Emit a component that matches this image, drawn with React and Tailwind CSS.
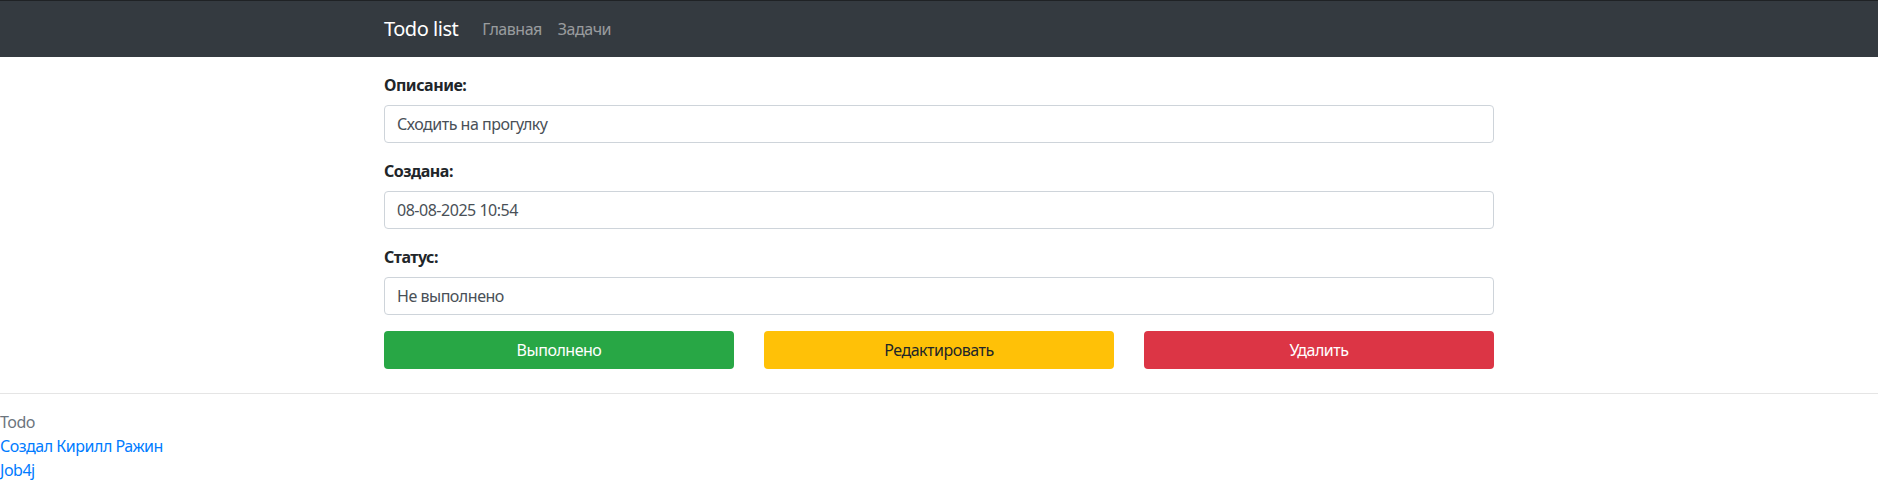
export default function App() {
    return (
        <div className="min-h-[486px] bg-white text-[#212529] text-base leading-6 tracking-[-0.03em] font-['Segoe_UI','Noto_Sans','Liberation_Sans',sans-serif]">
            <nav className="bg-[#343a40] border-t border-[#1f2225] h-[57px]">
                <div className="w-[1110px] mx-auto h-full flex items-center">
                    <a className="text-white text-[20px] leading-[30px] mr-4">Todo list</a>
                    <a className="text-white/50 px-2">Главная</a>
                    <a className="text-white/50 px-2">Задачи</a>
                </div>
            </nav>

            <main className="w-[1110px] mx-auto pt-4">
                <div className="mb-4">
                    <label className="block font-bold mb-2">Описание:</label>
                    <div className="h-[38px] border border-[#ced4da] rounded px-3 flex items-center text-[#495057]">
                        Сходить на прогулку
                    </div>
                </div>
                <div className="mb-4">
                    <label className="block font-bold mb-2">Создана:</label>
                    <div className="h-[38px] border border-[#ced4da] rounded px-3 flex items-center text-[#495057]">
                        08-08-2025 10:54
                    </div>
                </div>
                <div className="mb-4">
                    <label className="block font-bold mb-2">Статус:</label>
                    <div className="h-[38px] border border-[#ced4da] rounded px-3 flex items-center text-[#495057]">
                        Не выполнено
                    </div>
                </div>
                <div className="grid grid-cols-3 gap-[30px]">
                    <button className="h-[38px] rounded bg-[#28a745] text-white">Выполнено</button>
                    <button className="h-[38px] rounded bg-[#ffc107] text-[#212529]">Редактировать</button>
                    <button className="h-[38px] rounded bg-[#dc3545] text-white">Удалить</button>
                </div>
            </main>

            <hr className="mt-6 border-t border-black/10" />
            <footer className="pt-4">
                <div className="text-[#6c757d]">Todo</div>
                <a className="block text-[#007bff]">Создал Кирилл Ражин</a>
                <a className="block text-[#007bff]">Job4j</a>
            </footer>
        </div>
    );
}
